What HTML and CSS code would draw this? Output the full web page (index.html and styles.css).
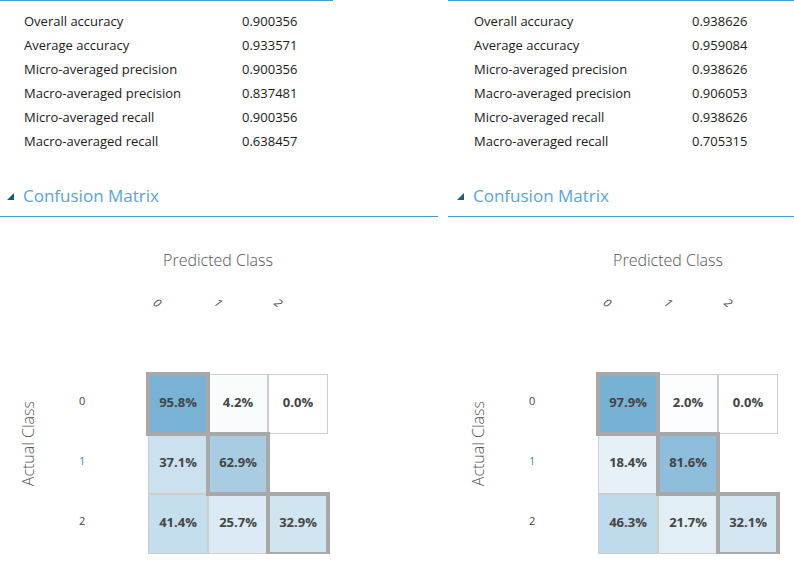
FILE: index.html
```html
<!DOCTYPE html>
<html>
<head>
<meta charset="utf-8">
<link rel="stylesheet" href="styles.css">
</head>
<body>
<div class="page">
  <section class="panel">
    <div class="toprule toprule-short"></div>
    <div class="metrics">
      <span>Overall accuracy</span><span>0.900356</span>
      <span>Average accuracy</span><span>0.933571</span>
      <span>Micro-averaged precision</span><span>0.900356</span>
      <span>Macro-averaged precision</span><span>0.837481</span>
      <span>Micro-averaged recall</span><span>0.900356</span>
      <span>Macro-averaged recall</span><span>0.638457</span>
    </div>
    <h2 class="section-title"><svg class="caret" width="7" height="7" viewBox="0 0 7 7"><polygon points="7,0 7,7 0,7" fill="#1f5a7a"/></svg>Confusion Matrix</h2>
    <div class="matrix">
      <div class="pred-title">Predicted Class</div>
      <div class="col-label c1"><span>0</span></div>
      <div class="col-label c2"><span>1</span></div>
      <div class="col-label c3"><span>2</span></div>
      <div class="actual-title">Actual Class</div>
      <div class="row-label r1">0</div>
      <div class="row-label r2">1</div>
      <div class="row-label r3">2</div>
      <div class="cells">
        <div class="cell diag" style="background:rgb(122,178,213)">95.8%</div>
        <div class="cell" style="background:rgb(249,252,253)">4.2%</div>
        <div class="cell" style="background:rgb(255,255,255)">0.0%</div>
        <div class="cell" style="background:rgb(203,225,239)">37.1%</div>
        <div class="cell diag" style="background:rgb(168,205,227)">62.9%</div>
        <div class="cell empty"></div>
        <div class="cell" style="background:rgb(197,222,237)">41.4%</div>
        <div class="cell" style="background:rgb(219,234,244)">25.7%</div>
        <div class="cell diag" style="background:rgb(209,229,241)">32.9%</div>
      </div>
    </div>
  </section>
  <section class="panel">
    <div class="toprule"></div>
    <div class="metrics">
      <span>Overall accuracy</span><span>0.938626</span>
      <span>Average accuracy</span><span>0.959084</span>
      <span>Micro-averaged precision</span><span>0.938626</span>
      <span>Macro-averaged precision</span><span>0.906053</span>
      <span>Micro-averaged recall</span><span>0.938626</span>
      <span>Macro-averaged recall</span><span>0.705315</span>
    </div>
    <h2 class="section-title"><svg class="caret" width="7" height="7" viewBox="0 0 7 7"><polygon points="7,0 7,7 0,7" fill="#1f5a7a"/></svg>Confusion Matrix</h2>
    <div class="matrix">
      <div class="pred-title">Predicted Class</div>
      <div class="col-label c1"><span>0</span></div>
      <div class="col-label c2"><span>1</span></div>
      <div class="col-label c3"><span>2</span></div>
      <div class="actual-title">Actual Class</div>
      <div class="row-label r1">0</div>
      <div class="row-label r2">1</div>
      <div class="row-label r3">2</div>
      <div class="cells">
        <div class="cell diag" style="background:rgb(119,177,212)">97.9%</div>
        <div class="cell" style="background:rgb(252,253,254)">2.0%</div>
        <div class="cell" style="background:rgb(255,255,255)">0.0%</div>
        <div class="cell" style="background:rgb(229,240,247)">18.4%</div>
        <div class="cell diag" style="background:rgb(142,190,219)">81.6%</div>
        <div class="cell empty"></div>
        <div class="cell" style="background:rgb(191,218,235)">46.3%</div>
        <div class="cell" style="background:rgb(225,238,245)">21.7%</div>
        <div class="cell diag" style="background:rgb(210,229,241)">32.1%</div>
      </div>
    </div>
  </section>
</div>
</body>
</html>
```
FILE: styles.css
```css
html, body {
  margin: 0;
  padding: 0;
  background: #fff;
  overflow: hidden;
}
body {
  font-family: "Open Sans", "Noto Sans", sans-serif;
  color: #1a1a1a;
}
.page {
  display: flex;
  gap: 10px;
  width: 1000px;
}
.panel {
  width: 440px;
  flex-shrink: 0;
}
.toprule {
  height: 1px;
  background: #3a9fcb;
  margin-left: -2px;
}
.toprule-short {
  width: 335px;
}
.metrics {
  display: grid;
  grid-template-columns: 218px auto;
  padding-left: 24px;
  margin-top: 8px;
  font-size: 13px;
  line-height: 24px;
  color: #1a1a1a;
}
.section-title {
  margin: 28px 2px 0 -2px;
  padding: 1px 0 6px 2px;
  border-bottom: 1px solid #3a9fcb;
  font-size: 17px;
  font-weight: 400;
  line-height: 28px;
  color: #5aa4d6;
  display: flex;
  align-items: center;
}
.caret {
  margin: 1px 9px 0 7px;
}
.matrix {
  display: grid;
  grid-template-columns: 66px 82px 180px;
  grid-template-rows: 24px 41px 61px 60px 60px 60px;
  margin-top: 31px;
}
.pred-title {
  grid-column: 3;
  grid-row: 1;
  text-align: center;
  padding-right: 40px;
  font-size: 16px;
  font-weight: 300;
  color: #555;
  line-height: 24px;
}
.col-label {
  grid-row: 2;
  grid-column: 3;
  margin-top: 23px;
  width: 18px;
  height: 16px;
  text-align: center;
  font-size: 11.5px;
  line-height: 16px;
  color: #3a4a66;
  font-style: italic;
}
.col-label span {
  display: inline-block;
  transform: rotate(40deg);
}
.c1 { margin-left: 0px; }
.c2 { margin-left: 61px; }
.c3 { margin-left: 121px; }
.actual-title {
  grid-column: 1;
  grid-row: 4 / 7;
  writing-mode: vertical-rl;
  transform: rotate(180deg);
  align-self: center;
  justify-self: center;
  margin-bottom: 40px;
  font-size: 16px;
  font-weight: 300;
  color: #555;
  line-height: 20px;
  padding-left: 10px;
}
.row-label {
  grid-column: 2;
  padding-left: 13px;
  font-size: 11px;
  color: #444;
  line-height: 14px;
  margin-top: 20px;
}
.r1 { grid-row: 4; }
.r2 { grid-row: 5; color: #4a8cc0; }
.r3 { grid-row: 6; }
.cells {
  grid-column: 3;
  grid-row: 4 / 7;
  display: grid;
  grid-template-columns: repeat(3, 60px);
  grid-template-rows: repeat(3, 60px);
}
.cell {
  box-sizing: border-box;
  width: 60px;
  height: 60px;
  padding-bottom: 4px;
  border: 1px solid #cdcdcd;
  display: flex;
  align-items: center;
  justify-content: center;
  font-size: 13px;
  font-weight: 700;
  color: #444;
}
.cell.empty {
  border: none;
  background: transparent;
}
.cell.diag {
  position: relative;
  z-index: 1;
  border: none;
  outline: 4px solid #a8a8a8;
  outline-offset: -2px;
}
```
